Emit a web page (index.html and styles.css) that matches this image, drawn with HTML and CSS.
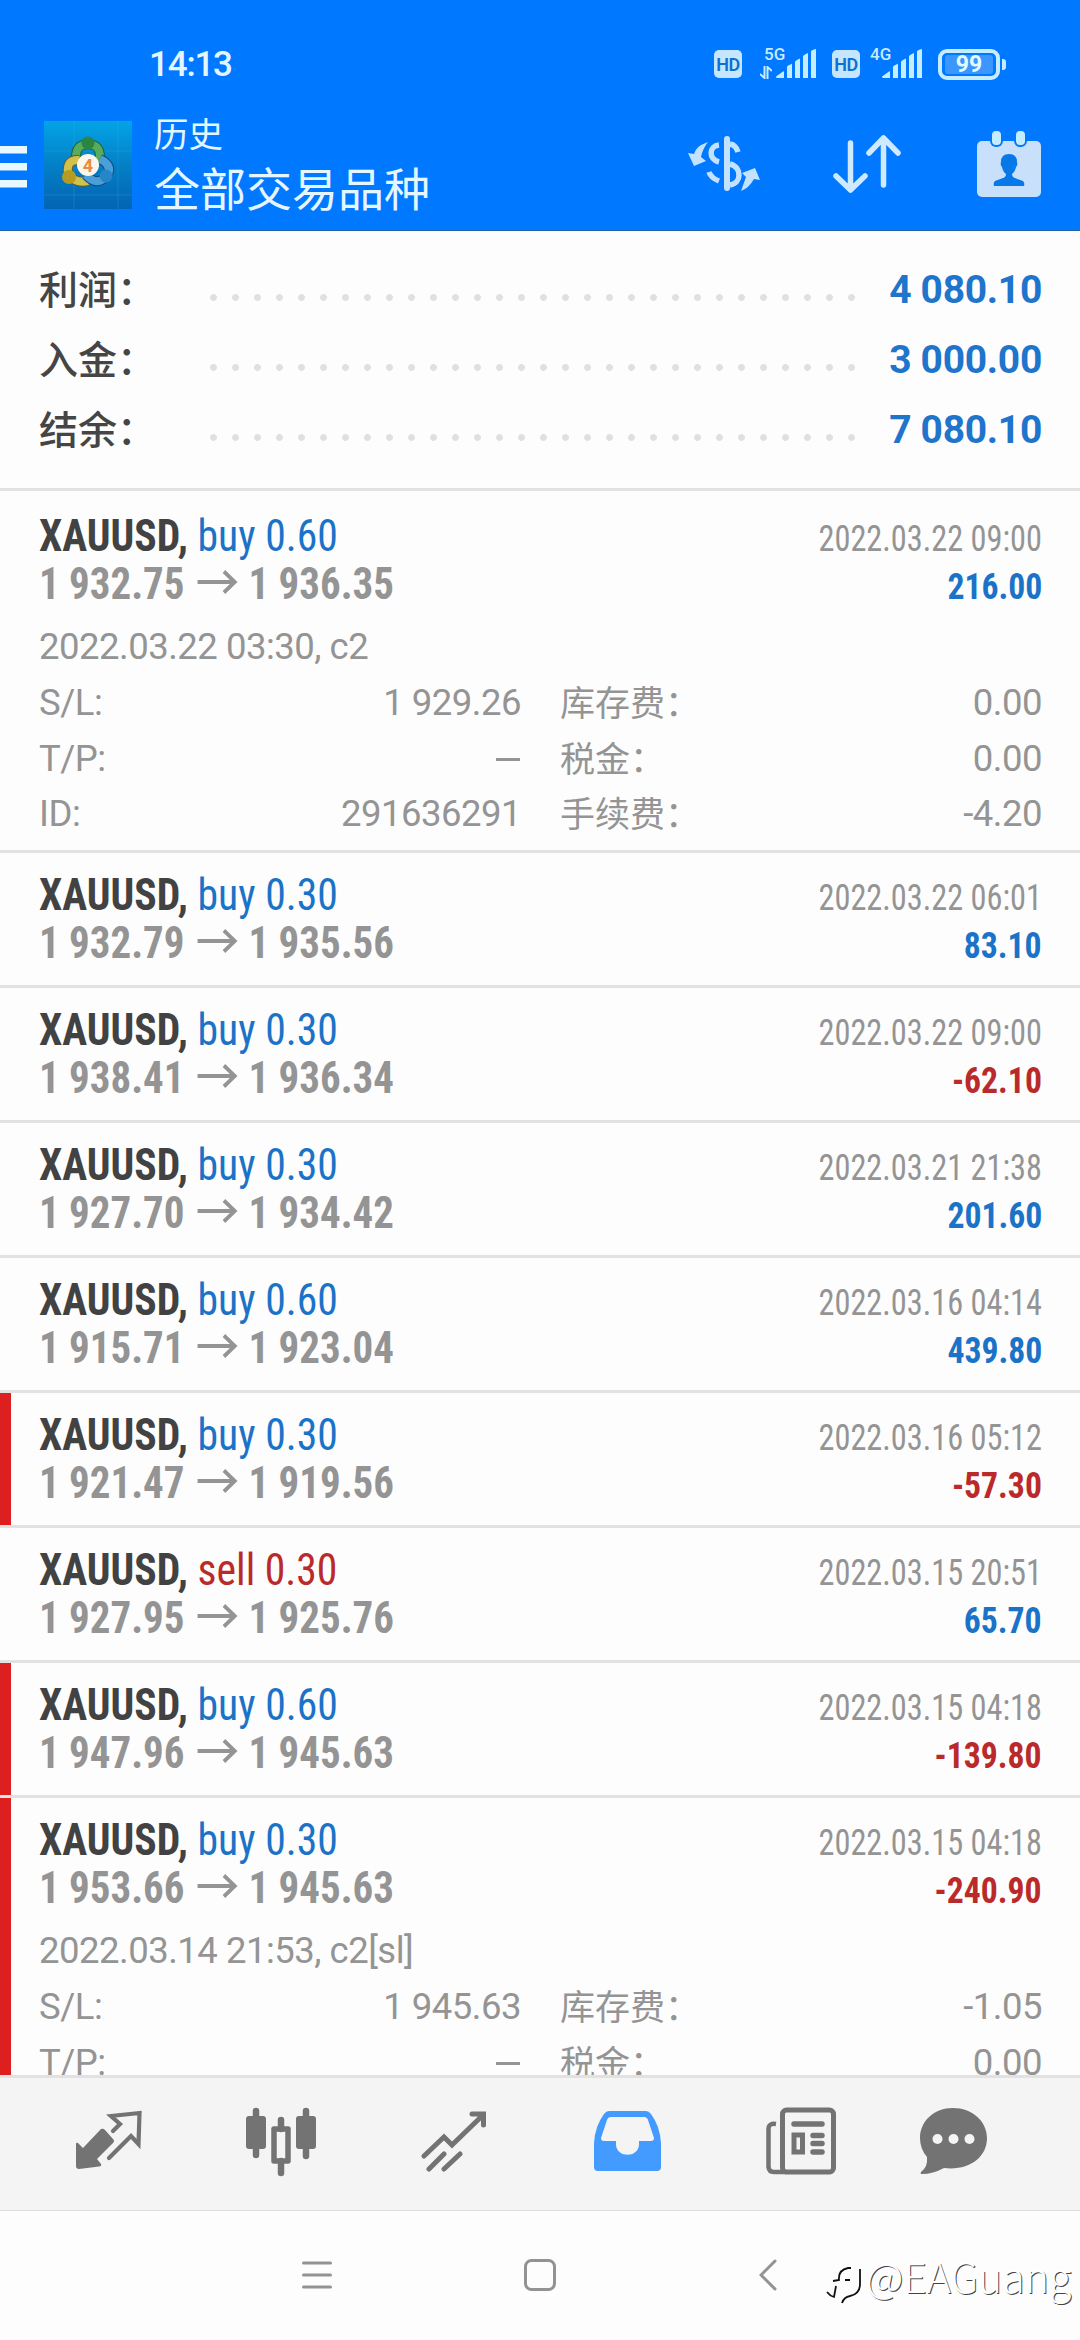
FILE: index.html
```html
<!DOCTYPE html>
<html lang="zh-CN">
<head>
<meta charset="utf-8">
<title>历史</title>
<link rel="stylesheet" href="styles.css">
</head>
<body>
<svg class="defs" width="0" height="0">
  <symbol id="arrow" viewBox="0 0 42 26"><path d="M0 13H39M28 2.5L39.5 13L28 23.5" fill="none" stroke="currentColor" stroke-width="4"/></symbol>
  <symbol id="signal" viewBox="0 0 40 30"><path d="M0 27.500L7 22.500Q8 22 8 23V29H1.500Q0 29 0 27.500ZM11 18Q11 16.700 16 14.700V29H11ZM19 13Q19 11.500 24 9.500V29H19ZM27 7.500Q27 6 32 4V29H27ZM35 2.500Q35 1 40 0V29H35Z"/></symbol>
</svg>
<div class="screen">
  <header class="header">
    <div class="status">
      <span class="clock">14:13</span>
      <div class="status-icons">
        <span class="hd">HD</span>
        <div class="net net-5g">
          <div class="net-label"><span>5G</span><svg width="12" height="13" viewBox="0 0 12 13"><path d="M4.500 0V12L0 8M7.500 13V1L12 5" fill="none" stroke="currentColor" stroke-width="2"/></svg></div>
          <svg width="40" height="30"><use href="#signal"/></svg>
        </div>
        <span class="hd">HD</span>
        <div class="net net-4g">
          <div class="net-label"><span>4G</span></div>
          <svg width="40" height="30"><use href="#signal"/></svg>
        </div>
        <div class="battery"><span class="battery-level">99</span></div>
      </div>
    </div>
    <div class="appbar">
      <svg class="menu" width="28" height="42" viewBox="0 0 28 42"><path d="M0 0H27V7.500H0ZM0 17H27V24.500H0ZM0 34H27V41.500H0Z" fill="#e8f8ff"/></svg>
      <svg class="logo" width="88" height="88" viewBox="0 0 88 88">
        <defs>
          <linearGradient id="sky" x1="0" y1="0" x2="0" y2="1"><stop offset="0" stop-color="#03a4e6"/><stop offset=".5" stop-color="#0380c6"/><stop offset="1" stop-color="#0364b4"/></linearGradient>
        </defs>
        <rect width="88" height="88" fill="url(#sky)"/>
        <path d="M0 30H88M0 74H88M30 0V88M74 0V88" stroke="#4bb5e6" stroke-opacity=".25" fill="none"/>
        <path d="M33 41Q29 24 44 23Q59 24 55 41" fill="none" stroke="#1c5d3c" stroke-width="10"/>
        <path d="M33 41Q29 24 44 23Q59 24 55 41" fill="none" stroke="#58ab5c" stroke-width="8"/>
        <path d="M35 39Q22 38 24 53Q31 63 44 60" fill="none" stroke="#685e20" stroke-width="10"/>
        <path d="M35 39Q22 38 24 53Q31 63 44 60" fill="none" stroke="#d0c04c" stroke-width="8"/>
        <path d="M56 38Q68 44 64 53Q54 67 42 54" fill="none" stroke="#124d82" stroke-width="10"/>
        <path d="M56 38Q68 44 64 53Q54 67 42 54" fill="none" stroke="#4b9fd8" stroke-width="8"/>
        <circle cx="44" cy="22" r="6.500" fill="#2c8540"/><circle cx="25" cy="56" r="7" fill="#b59c20"/><circle cx="62" cy="55" r="6.500" fill="#2786c8"/>
        <circle cx="44" cy="44" r="11" fill="#fbf6ec"/>
        <text x="44" y="51" class="logo-num">4</text>
      </svg>
      <div class="titles"><div class="subtitle">历史</div><div class="title">全部交易品种</div></div>
      <div class="actions">
        <svg class="deposit" width="73" height="66" viewBox="0 0 73 66"><g fill="none" stroke="#c3e2ff" stroke-width="5.500"><path d="M39 8V57" stroke-width="6" stroke-linecap="round"/><path d="M31 14C21 15 20 28 31 31M31 50Q23 47 21 41M42 13Q48 14 50 21M42 33C54 36 54 52 42 54"/></g><path d="M20 11L13 14Q8 17 6 23L0 22L6 35L18 30L13 26Q15 17 20 11ZM53 60L58 46L54 42L67 37L72 49L66 48Q61 57 53 60Z" fill="#c3e2ff"/></svg>
        <svg width="68" height="66" viewBox="0 0 68 66"><path d="M17.500 12V59M3 45L17.500 59L32 45M50.500 54V7M36 22L50.500 7L65 22" fill="none" stroke="#cfe9ff" stroke-width="5.500" stroke-linecap="round" stroke-linejoin="round"/></svg>
        <svg width="64" height="66" viewBox="0 0 64 66"><rect y="10" width="64" height="56" rx="5" fill="#c8e0fa"/><rect x="13" y="-3" width="13" height="19" rx="6" fill="#0078ff"/><rect x="37" y="-3" width="13" height="19" rx="6" fill="#0078ff"/><rect x="15" y="0" width="9" height="14" rx="4" fill="#c3ecff"/><rect x="39" y="0" width="9" height="14" rx="4" fill="#c3ecff"/><path d="M32 23Q40 23 40 31Q41 34 39 36Q38 41 35 43Q35 46 38 47L46 50Q48 52 47 55H17Q16 52 18 50L26 47Q29 46 29 43Q26 41 25 36Q23 34 24 31Q24 23 32 23Z" fill="#0778e8"/></svg>
      </div>
    </div>
  </header>

  <section class="summary">
    <div class="sum-row"><span class="sum-label">利润：</span><i class="dots"></i><b class="sum-value">4 080.10</b></div>
    <div class="sum-row"><span class="sum-label">入金：</span><i class="dots"></i><b class="sum-value">3 000.00</b></div>
    <div class="sum-row"><span class="sum-label">结余：</span><i class="dots"></i><b class="sum-value">7 080.10</b></div>
  </section>

  <main class="list">
    <article class="deal">
      <div class="line"><div class="name"><b>XAUUSD,</b> <span class="buy">buy 0.60</span></div><div class="time">2022.03.22 09:00</div></div>
      <div class="line"><div class="prices">1 932.75<svg class="arrow"><use href="#arrow"/></svg>1 936.35</div><div class="profit buy">216.00</div></div>
      <div class="comment">2022.03.22 03:30, c2</div>
      <div class="details">
        <span>S/L:</span><span>1 929.26</span><span class="cjk">库存费：</span><span>0.00</span>
        <span>T/P:</span><span class="dash"></span><span class="cjk">税金：</span><span>0.00</span>
        <span>ID:</span><span>291636291</span><span class="cjk">手续费：</span><span>-4.20</span>
      </div>
    </article>
    <article class="deal">
      <div class="line"><div class="name"><b>XAUUSD,</b> <span class="buy">buy 0.30</span></div><div class="time">2022.03.22 06:01</div></div>
      <div class="line"><div class="prices">1 932.79<svg class="arrow"><use href="#arrow"/></svg>1 935.56</div><div class="profit buy">83.10</div></div>
    </article>
    <article class="deal">
      <div class="line"><div class="name"><b>XAUUSD,</b> <span class="buy">buy 0.30</span></div><div class="time">2022.03.22 09:00</div></div>
      <div class="line"><div class="prices">1 938.41<svg class="arrow"><use href="#arrow"/></svg>1 936.34</div><div class="profit sell">-62.10</div></div>
    </article>
    <article class="deal">
      <div class="line"><div class="name"><b>XAUUSD,</b> <span class="buy">buy 0.30</span></div><div class="time">2022.03.21 21:38</div></div>
      <div class="line"><div class="prices">1 927.70<svg class="arrow"><use href="#arrow"/></svg>1 934.42</div><div class="profit buy">201.60</div></div>
    </article>
    <article class="deal">
      <div class="line"><div class="name"><b>XAUUSD,</b> <span class="buy">buy 0.60</span></div><div class="time">2022.03.16 04:14</div></div>
      <div class="line"><div class="prices">1 915.71<svg class="arrow"><use href="#arrow"/></svg>1 923.04</div><div class="profit buy">439.80</div></div>
    </article>
    <article class="deal stopped">
      <div class="line"><div class="name"><b>XAUUSD,</b> <span class="buy">buy 0.30</span></div><div class="time">2022.03.16 05:12</div></div>
      <div class="line"><div class="prices">1 921.47<svg class="arrow"><use href="#arrow"/></svg>1 919.56</div><div class="profit sell">-57.30</div></div>
    </article>
    <article class="deal">
      <div class="line"><div class="name"><b>XAUUSD,</b> <span class="sell">sell 0.30</span></div><div class="time">2022.03.15 20:51</div></div>
      <div class="line"><div class="prices">1 927.95<svg class="arrow"><use href="#arrow"/></svg>1 925.76</div><div class="profit buy">65.70</div></div>
    </article>
    <article class="deal stopped">
      <div class="line"><div class="name"><b>XAUUSD,</b> <span class="buy">buy 0.60</span></div><div class="time">2022.03.15 04:18</div></div>
      <div class="line"><div class="prices">1 947.96<svg class="arrow"><use href="#arrow"/></svg>1 945.63</div><div class="profit sell">-139.80</div></div>
    </article>
    <article class="deal stopped">
      <div class="line"><div class="name"><b>XAUUSD,</b> <span class="buy">buy 0.30</span></div><div class="time">2022.03.15 04:18</div></div>
      <div class="line"><div class="prices">1 953.66<svg class="arrow"><use href="#arrow"/></svg>1 945.63</div><div class="profit sell">-240.90</div></div>
      <div class="comment">2022.03.14 21:53, c2[sl]</div>
      <div class="details">
        <span>S/L:</span><span>1 945.63</span><span class="cjk">库存费：</span><span>-1.05</span>
        <span>T/P:</span><span class="dash"></span><span class="cjk">税金：</span><span>0.00</span>
      </div>
    </article>
  </main>

  <nav class="tabs">
    <svg width="68" height="70" viewBox="0 0 68 70"><path d="M1 37Q1 35 3 36L8 41L26 22Q28 21 30 23L38 32Q40 34 38 36L22 52L26 57Q27 59 24 59.500L4 62Q1 62 1 59Z" fill="#737373"/><path d="M38 24L45 17L36 9L64.500 6L63.500 37L56 29L34 51" fill="none" stroke="#737373" stroke-width="4.200" stroke-linecap="round"/></svg>
    <svg width="70" height="70" viewBox="0 0 70 70"><path d="M10 4V48M60 4V49M35 13V22M35 54V66" stroke="#737373" stroke-width="6.500" stroke-linecap="round"/><rect y="9" width="20" height="33" rx="3" fill="#737373"/><rect x="50" y="9" width="20" height="33" rx="3" fill="#737373"/><rect x="28" y="22" width="14" height="32" fill="none" stroke="#737373" stroke-width="5.500" stroke-linejoin="round"/></svg>
    <svg width="66" height="70" viewBox="0 0 66 70"><path d="M3 49L23 30L31 38L62 8M51 7H62.500V18M8 62L23 47M23 62L39 47" fill="none" stroke="#737373" stroke-width="5" stroke-linecap="round"/></svg>
    <svg width="67" height="70" viewBox="0 0 67 70"><path fill-rule="evenodd" d="M15 4H52Q55 4 57 7Q66 19 67 36V60Q67 64 63 64H4Q0 64 0 60V36Q1 19 10 7Q12 4 15 4ZM17 10Q14 10 13 13L7 31Q7 34 10 34H22V38C23 51 44 51 45 38V34H57Q60 34 60 31L54 13Q53 10 50 10Z" fill="#439bff"/></svg>
    <svg width="70" height="70" viewBox="0 0 70 70"><g fill="none" stroke="#737373"><rect x="16.500" y="3" width="51" height="62" rx="4" stroke-width="5"/><path d="M10 17Q2.500 16 2.500 22V60Q3 65 8 65H20" stroke-width="4.500"/><path d="M28 17H56M47 28.500H56M47 36.500H56M47 45H56" stroke-width="5.500" stroke-linecap="round"/><rect x="28" y="28" width="8.500" height="17" stroke-width="5"/></g></svg>
    <svg width="67" height="70" viewBox="0 0 67 70"><path d="M33 1C52 1 67 14 67 31C67 51 48 64 24 61Q13 67 2 67Q0 67 1 65Q8 60 7 50Q0 42 0 31C0 14 14 1 33 1Z" fill="#737373"/><g fill="#f4f4f4"><circle cx="17.500" cy="32" r="5"/><circle cx="33.500" cy="32" r="5"/><circle cx="49.500" cy="32" r="5"/></g></svg>
  </nav>

  <footer class="sysnav">
    <svg width="30" height="32" viewBox="0 0 30 32"><path d="M1.500 4H28.500M1.500 16H28.500M1.500 28H28.500" stroke="#939393" stroke-width="3" stroke-linecap="round"/></svg>
    <svg width="32" height="32" viewBox="0 0 32 32"><rect x="1.500" y="1.500" width="29" height="29" rx="6" fill="none" stroke="#939393" stroke-width="3"/></svg>
    <svg width="18" height="32" viewBox="0 0 18 32"><path d="M16 2L2 16L16 30" fill="none" stroke="#939393" stroke-width="3" stroke-linecap="round"/></svg>
    <div class="watermark">
      <svg width="36" height="40" viewBox="0 0 36 40"><path d="M1 26Q4 30 8 31L10 20M7 15L13 14Q12 4 22 2H25M19 14H24M34 3V18Q34 28 24 30Q18 31 16 37" fill="none" stroke="#111" stroke-width="1.800"/></svg>
      <span>@EAGuang</span>
    </div>
  </footer>
</div>
</body>
</html>
```
FILE: styles.css
```css
* { box-sizing: border-box; }
body { margin: 0; background: #fdfdfd; }
svg { display: block; flex: none; }
.defs { position: absolute; }
.screen {
  width: 1080px; height: 2340px; overflow: hidden;
  display: flex; flex-direction: column;
  font-family: Roboto, "Noto Sans CJK SC", sans-serif;
  color: #949494; white-space: nowrap;
}

.header { height: 231px; flex: none; background: #0078ff; border-bottom: 1px solid #1f66ad; }
.status { height: 112px; padding: 0 80px 0 149px; display: flex; justify-content: space-between; color: #c6ecff; }
.clock { padding-top: 44px; font-size: 35px; line-height: 41px; font-weight: 500; letter-spacing: -1.200px; color: #e3f6ff; }
.status-icons { padding-top: 48px; display: flex; align-items: flex-start; }
.hd { width: 28px; height: 28px; margin-top: 2px; border-radius: 5px; background: #c6e6ff; color: #0f70d0; font: 600 18px/29px Roboto, sans-serif; letter-spacing: -.5px; text-align: center; }
.net { display: flex; height: 30px; padding-top: 1px; margin-right: 16px; }
.net svg { fill: currentColor; }
.net-label { font-size: 17px; line-height: 14px; font-weight: 500; margin-top: -2px; display: flex; flex-direction: column; }
.net-5g { margin-left: 18px; }
.net-5g span { margin-left: 4px; }
.net-5g .net-label { width: 26px; margin-right: -10px; gap: 5px; }
.net-4g { margin-left: 10px; }
.net-4g .net-label { width: 12px; }
.battery { position: relative; width: 62px; height: 31px; margin-top: 1px; border: 4px solid #c6ecff; border-radius: 9px; padding: 2px 3px; }
.battery::after { content: ""; position: absolute; right: -10px; top: 6px; width: 4px; height: 11px; border-radius: 0 3px 3px 0; background: #c6ecff; }
.battery-level { display: block; height: 19px; border-radius: 3px; background: #3b96ff; color: #e3fbff; font-size: 23px; line-height: 20px; font-weight: 700; text-align: center; }

.appbar { height: 118px; display: flex; align-items: flex-start; }
.menu { margin-top: 34px; }
.logo { margin: 9px 22px 0 16px; }
.logo-num { font: 700 18px Roboto, sans-serif; fill: #ea8a3c; text-anchor: middle; }
.titles { color: #e4f6ff; font-family: "Noto Sans CJK SC", sans-serif; flex: 1; }
.subtitle { font-size: 34.500px; line-height: 44px; margin-top: -2px; }
.title { font-size: 46px; line-height: 60px; margin-top: 2px; }
.actions { display: flex; padding: 19px 39px 0 0; gap: 76px; }
.deposit { margin-right: -4px; }

.summary { height: 257px; flex: none; padding: 24px 38px 0 39px; }
.sum-row { height: 70px; display: flex; align-items: center; }
.sum-label { width: 171px; margin-top: -6px; font: 500 39px/70px "Noto Sans CJK SC", sans-serif; color: #454545; }
.dots { width: 660px; height: 7px; margin-top: 15px; background: radial-gradient(circle at 3.500px 3.500px, #e0e0e0 3px, transparent 3.800px) 0 0 / 22px 7px; }
.sum-value { margin-left: auto; font-size: 39px; line-height: 70px; letter-spacing: -.300px; color: #1f74cc; }

.list { height: 1587px; flex: none; overflow: hidden; }
.deal { position: relative; border-top: 3px solid #e2e2e2; padding: 19px 38px 0 39px; height: 135px; }
.deal:has(.details) { height: 362px; }
.deal:first-child { padding-top: 22px; }
.stopped::before { content: ""; position: absolute; left: 0; top: 0; bottom: 0; width: 11px; background: #de1f1f; }
.line { display: flex; justify-content: space-between; align-items: baseline; height: 48px; line-height: 48px; font-family: "Roboto Condensed", Roboto, sans-serif; font-stretch: 75%; }
.name, .prices { font-size: 43.500px; transform-origin: left; }
.name { transform: scaleX(.957); }
.name b { color: #424242; }
.prices { font-weight: 700; transform: scaleX(.941); }
.arrow { display: inline-block; width: 45px; height: 26px; margin: 0 11px 0 12px; vertical-align: 4px; overflow: visible; }
.time, .profit { font-size: 37px; transform-origin: right; }
.time { transform: scaleX(.873); }
.profit { font-weight: 700; transform: scaleX(.91); }
.buy { color: #1b73c8; }
.sell { color: #bb2a2a; }
.comment { margin-top: 10px; font-size: 36.500px; line-height: 56px; letter-spacing: -.500px; }
.details { display: grid; grid-template-columns: 131px 351px 210px 1fr; grid-auto-rows: 55.500px; font-size: 36.500px; line-height: 55.500px; letter-spacing: -.500px; }
.details span:nth-child(even) { text-align: right; }
.details .cjk { padding-left: 39px; margin-top: -2px; letter-spacing: 0; font: 400 35px/55.500px "Noto Sans CJK SC", sans-serif; }
.details .dash { justify-self: end; width: 24px; height: 3px; margin: 27px 1px 0 0; background: #949494; }

.tabs { height: 136px; flex: none; padding: 29px 0 0 75px; border-top: 3px solid #e2e2e2; border-bottom: 1px solid #dcdcdc; background: #f4f4f4; display: flex; gap: 105px; }
.tabs svg:first-child { margin-right: -2px; }
.tabs svg:nth-child(4) { margin-left: 2px; }
.tabs svg:last-child { margin-left: -21px; }

.sysnav { height: 129px; position: relative; display: flex; padding: 48px 0 0 302px; }
.sysnav > svg:nth-child(2) { margin-left: 192px; }
.sysnav > svg:nth-child(3) { margin-left: 203px; }
.watermark { position: absolute; left: 826px; top: 39px; display: flex; color: #fff; font: 300 41px/50px "Noto Sans CJK SC", sans-serif; text-shadow: 1px 1px 0 #444; }
.watermark svg { margin: 16px 4px 0 0; }
```
